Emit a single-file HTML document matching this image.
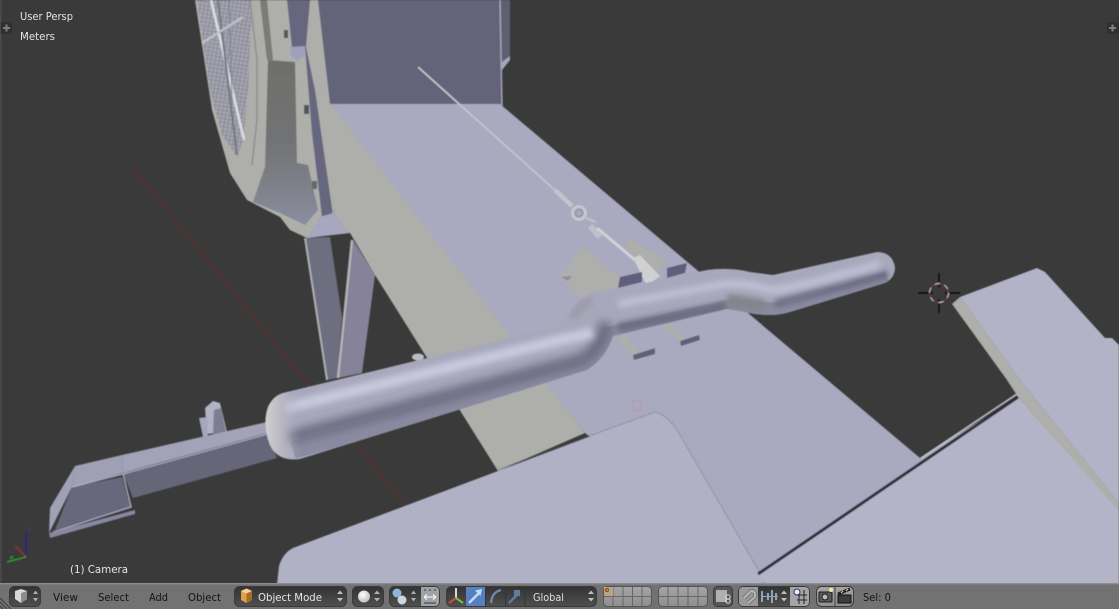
<!DOCTYPE html>
<html>
<head>
<meta charset="utf-8">
<title>Blender viewport</title>
<style>
html,body{margin:0;padding:0;background:#3a3a3a;width:1119px;height:609px;overflow:hidden}
svg{display:block}
text{font-family:"DejaVu Sans","Liberation Sans",sans-serif}
</style>
</head>
<body>
<svg width="1119" height="609" viewBox="0 0 1119 609" xmlns="http://www.w3.org/2000/svg">
<defs>
<filter id="s" x="-2%" y="-2%" width="104%" height="104%"><feGaussianBlur stdDeviation="0.5"/></filter>
<filter id="b2" filterUnits="userSpaceOnUse" x="200" y="200" width="760" height="300"><feGaussianBlur stdDeviation="3"/></filter>
<filter id="b4" filterUnits="userSpaceOnUse" x="200" y="200" width="760" height="300"><feGaussianBlur stdDeviation="4.500"/></filter>
<clipPath id="barClip"><path d="M283,393 L563,325 Q572,302 592,293 L650,282 L707,270 Q730,267 750,272 L773,275 L877,252 Q892,252 895,267 Q895,278 885,283 L790,312 Q770,318 745,312 L727,309 L613,336 Q606,358 587,370 L300,459 Q278,462 270,445 Q262,425 268,407 Q273,396 283,393Z"/></clipPath>
<linearGradient id="gCap" gradientUnits="userSpaceOnUse" x1="265" y1="0" x2="302" y2="0">
<stop offset="0" stop-color="#d2d2d2"/><stop offset=".3" stop-color="#c6c6ca" stop-opacity=".8"/><stop offset="1" stop-color="#aaaabc" stop-opacity="0"/>
</linearGradient>
<linearGradient id="gDark" x1="0" y1="0" x2="0" y2="1">
<stop offset="0" stop-color="#6e6e6a"/><stop offset=".5" stop-color="#727375"/><stop offset="1" stop-color="#8a8e9e"/>
</linearGradient>
<linearGradient id="btn" x1="0" y1="0" x2="0" y2="1">
<stop offset="0" stop-color="#333"/><stop offset="1" stop-color="#4f4f4f"/>
</linearGradient>
<linearGradient id="gry" x1="0" y1="0" x2="0" y2="1">
<stop offset="0" stop-color="#a5a5a5"/><stop offset="1" stop-color="#8f8f8f"/>
</linearGradient>
<radialGradient id="sph" cx=".4" cy=".35" r=".7"><stop offset="0" stop-color="#fff"/><stop offset="1" stop-color="#bbb"/></radialGradient>
<pattern id="grid" width="4" height="4" patternUnits="userSpaceOnUse" patternTransform="rotate(10)">
<rect width="4" height="4" fill="#9a9aa6"/><path d="M0 0V4" stroke="#c4c4ce" stroke-width="1"/><path d="M0 2H4" stroke="#80808e" stroke-width=".6"/>
</pattern>
</defs>

<rect width="1119" height="609" fill="#3a3a3a"/>
<rect x="0" y="0" width="1.500" height="584" fill="#4b4b4b"/>

<g filter="url(#s)">
<!-- red axis -->
<path d="M133,167 L405,505" stroke="#5b3030" stroke-width="1.600" fill="none"/>

<!-- legs -->
<path d="M305,238 L330,237 L342,317 L337,378 L327,380Z" fill="#6d6e80"/>
<path d="M305,238 L327,380" stroke="#b0b0b0" stroke-width="2" fill="none"/>
<path d="M353,240 L375,275 L362,373 L338,378Z" fill="#858299"/>
<path d="M352,240 L338,378" stroke="#b5b5b5" stroke-width="2.400" fill="none"/>

<!-- back wall -->
<path d="M318,0 L500,0 L500,106 L328,106Z" fill="#63637a"/>
<path d="M500,0 L510,0 L510,60 L502,70 L502,106 L500,106Z" fill="#5e5e72"/>
<path d="M500,0 L502,106" stroke="#a8a8bc" stroke-width="1.400"/>
<path d="M502,70 L510,60 L510,56 L502,62Z" fill="#a6a6bc"/>

<!-- fan body -->
<path d="M195,0 L212,110 L230,173 L247,200 L280,217 L290,230 L307,238 L350,233 L335,215 L330,104 L318,0Z" fill="#aeaeab"/>
<!-- grille -->
<path d="M197,0 L252,0 L248,93 L243,140 L237,157 L222,135 L210,90Z" fill="url(#grid)"/>
<path d="M211,0 L244,140" stroke="#dcdce2" stroke-width="2.600"/>
<path d="M218,0 L237,155" stroke="#777784" stroke-width="2"/>
<path d="M229,0 L232,100" stroke="#80808e" stroke-width="1"/>
<path d="M202,43 L243,17" stroke="#c0c0ca" stroke-width="2.400"/>
<path d="M250,0 L257,60 L257,120 L252,165" stroke="#8f8f94" stroke-width="1.500" fill="none"/>
<!-- dark strips -->
<path d="M260,0 L267,0 L273,60 L267,60Z" fill="#7b7b74"/>
<path d="M268,60 L295,62 L297,163 L308,165 L318,210 L305,225 L280,213 L253,202 L265,167Z" fill="url(#gDark)"/>
<path d="M287,0 L310,0 L306,47 L292,47Z" fill="#66667f"/>
<path d="M305,47 L306,47 L315,90 L333,215 L322,217 L312,133Z" fill="#66667f"/>
<path d="M290,47 L305,46 L305,55 L297,61 L291,55Z" fill="#a0a0bc"/>
<path d="M333,213 L350,232 L307,238 L320,217Z" fill="#a7a7c0"/>
<rect x="284" y="30" width="4" height="8" fill="#55555f"/>
<rect x="304" y="105" width="5" height="9" fill="#55555f"/>
<rect x="312" y="181" width="5" height="8" fill="#66666c"/>

<!-- board -->
<path d="M328,104 L500,104 L920,458 L1018,397 L760,575 L585,433Z" fill="#a9a9bf"/>
<!-- beige strip -->
<path d="M328,106 L331,105 L585,433 L498,471 L375,275 L350,233 L335,215Z" fill="#aeaeab"/>

<!-- cable -->
<path d="M418,67 L556,191" stroke="#c4c4c8" stroke-width="1.800" fill="none"/>
<path d="M555,190 L572,206" stroke="#c4c4cc" stroke-width="4.500" fill="none"/>
<circle cx="579" cy="213" r="6.500" fill="none" stroke="#c8c8d0" stroke-width="2.800"/>
<circle cx="579" cy="213" r="3.500" fill="none" stroke="#80808e" stroke-width=".8"/>
<path d="M586,218 L596,222" stroke="#c4c4cc" stroke-width="2"/>
<path d="M590,226 L600,237" stroke="#c0c0c8" stroke-width="6"/>
<!-- slot beige shapes -->
<path d="M582,245 L560,277 L578,297 L620,290 L620,278Z" fill="#aeaeac"/>
<path d="M630,238 L623,247 L657,273 L668,262Z" fill="#aeaeac"/>
<path d="M561,277 L572,276 L568,281Z" fill="#8e8e9c"/>
<path d="M597,228 L635,260" stroke="#d2d2d6" stroke-width="3"/>
<path d="M633,258 L640,255 L660,276 L647,286 L640,272Z" fill="#d0d0d2"/>
<path d="M620,277 L642,272 L642,282 L618,288Z" fill="#5f5f7c"/>
<path d="M667,268 L687,263 L685,273 L667,278Z" fill="#5f5f7c"/>
<path d="M615,337 L635,358 L641,355 L625,334Z" fill="#aeaeac"/>
<path d="M662,325 L680,343 L686,341 L670,323Z" fill="#aeaeac"/>
<path d="M633,355 L655,348 L655,354 L634,360Z" fill="#60607c"/>
<path d="M680,341 L699,335 L700,340 L681,346Z" fill="#60607c"/>
<ellipse cx="418" cy="357" rx="6" ry="3.500" fill="#bcbcc0"/>
<!-- origin square -->
<rect x="632.500" y="401" width="9" height="9" fill="none" stroke="#c58a96" stroke-width="1" stroke-dasharray="2.500 1.500"/>

<!-- handle -->
<path d="M205,408 L213,401 L220,403 L227,432 L207,434Z" fill="#b2b2c4"/>
<path d="M214,410 L221,408 L226,432 L213,434Z" fill="#7d7d90"/>
<path d="M199,418 L207,417 L208,437 L203,437Z" fill="#a6a6bc"/>
<path d="M122,455 L267,422 L268,433 L123,473Z" fill="#a2a2b8"/>
<path d="M123,473 L268,435 L277,458 L133,498Z" fill="#666679"/>
<path d="M75,466 L122,455 L123,473 L72,487Z" fill="#a0a0b4"/>
<path d="M75,466 L50,508 L49,533 L72,487Z" fill="#a0a0b6"/>
<path d="M72,487 L122,477 L130,507 L55,530Z" fill="#68687c"/>
<path d="M72,487 L123,474 L268,434" stroke="#b0b0c6" stroke-width="1.200" fill="none"/>
<path d="M123,474 L131,507 L53,532" stroke="#a6a6bc" stroke-width="1.500" fill="none"/>
<path d="M49,533 L135,510 L135,514 L50,538Z" fill="#8787a0"/>

<!-- seat centre -->
<path d="M277,584 L279,566 Q283,553 293,548 L498,471 L655,412 Q668,416 677,430 L760,573 L764,584Z" fill="#b1b1c6"/>
<path d="M499,469 L655,412 Q668,416 677,430 L760,573" fill="none" stroke="#565668" stroke-width=".7" stroke-dasharray="1.500 1.500"/>

<!-- lower right seat -->
<path d="M1018,397 L1119,510 L1119,584 L765,584 L758,575Z" fill="#b4b4c9"/>
<path d="M758,574 L1018,397" stroke="#2f2f38" stroke-width="3" fill="none"/>
<path d="M921,458 L1017,394" stroke="#c9c9d2" stroke-width="1.500" fill="none"/>

<!-- right panel -->
<path d="M952,304 L960,297 L1020,380 L1119,503 L1119,511 L1018,397 L1007,380Z" fill="#aeaeab"/>
<path d="M960,297 L1037,268 L1045,272 L1105,338 L1112,338 L1119,345 L1119,503 L1020,380Z" fill="#b3b3c8"/>

<!-- bar -->
<g clip-path="url(#barClip)">
<rect x="255" y="240" width="650" height="230" fill="#a8a8bc"/>
<!-- lower tone -->
<path d="M293,450 L590,368 L612,335 L727,309 L790,312 L888,280" stroke="#8a8aa0" stroke-width="18" fill="none"/>
<!-- shadows -->
<path d="M288,438 L580,360 Q602,350 606,322" stroke="#6c6c82" stroke-width="13" fill="none" filter="url(#b4)"/>
<path d="M618,328 L727,306" stroke="#6c6c82" stroke-width="10" fill="none" filter="url(#b2)"/>
<path d="M727,300 Q745,302 765,306" stroke="#84848c" stroke-width="12" fill="none" filter="url(#b2)"/>
<path d="M775,304 L888,274" stroke="#6c6c82" stroke-width="8" fill="none" filter="url(#b2)"/>
<!-- highlights -->
<path d="M285,408 L568,338 Q585,335 592,332" stroke="#c8c8de" stroke-width="11" fill="none" filter="url(#b2)"/>
<path d="M618,304 L725,284 Q750,283 770,290 Q780,292 880,264" stroke="#bebed4" stroke-width="8" fill="none" filter="url(#b2)"/>
<!-- bend top -->
<path d="M572,318 Q580,305 592,300" stroke="#9c9cac" stroke-width="10" fill="none" filter="url(#b2)"/>
<rect x="255" y="380" width="50" height="90" fill="url(#gCap)"/>
</g>

<!-- crosshair -->
<g fill="none">
<path d="M918,293H933M945,293H960M939,273V287M939,299V313" stroke="#000" stroke-width="1.200"/>
<circle cx="939" cy="293" r="9.500" stroke="#e8e8e8" stroke-width="1" stroke-dasharray="6 4"/>
<circle cx="939" cy="293" r="9.500" stroke="#8f2f35" stroke-width="1" stroke-dasharray="4 6" stroke-dashoffset="5"/>
</g>

<!-- axis gizmo -->
<path d="M26,533V557" stroke="#22228a" stroke-width="1.600"/>
<path d="M26,557L15,546" stroke="#8a3030" stroke-width="2"/>
<path d="M26,557L7,562" stroke="#2f9a2f" stroke-width="1.600"/>
<path d="M10,556l3,3m0-3l-3,3" stroke="#2f9a2f" stroke-width="1"/>
<text x="28" y="531" font-size="7" fill="#3a3ab0">z</text>
</g>

<!-- overlay text -->
<g font-size="10.500" fill="#e4e4e4">
<text x="20" y="20" textLength="53" lengthAdjust="spacingAndGlyphs">User Persp</text>
<text x="20" y="40" textLength="35" lengthAdjust="spacingAndGlyphs">Meters</text>
<text x="70" y="573" textLength="58" lengthAdjust="spacingAndGlyphs">(1) Camera</text>
</g>

<!-- corner plus widgets -->
<rect x="1" y="22" width="11" height="12" fill="#303030"/>
<path d="M3,28H10M6.500,24.500V31.500" stroke="#7f7f7f" stroke-width="2"/>
<rect x="1107" y="22" width="12" height="12" fill="#303030"/>
<path d="M1109,28H1116M1112.500,24.500V31.500" stroke="#7f7f7f" stroke-width="2"/>

<!-- header -->
<rect x="0" y="583" width="1119" height="26" fill="#727272"/>
<rect x="0" y="583" width="1119" height="1.400" fill="#8d8d8d"/>
<path d="M0,598L11,609M0,602L7,609M0,606L3,609" stroke="#3e3e3e" stroke-width="1"/>

<!-- editor type -->
<rect x="9.500" y="586.500" width="31" height="20" rx="5" fill="url(#btn)" stroke="#3a3a3a"/>
<path d="M15,591 L21,589 L27,591 L27,599 L21,603 L15,599Z" fill="#d8d8d8"/>
<path d="M21,593 L27,591 L27,599 L21,603Z" fill="#8c8c8c"/>
<path d="M33,594l2.500-3.500 2.500,3.500zM33,598l2.500,3.500 2.500-3.500z" fill="#b0b0b0"/>

<g font-size="10.500" fill="#141414">
<text x="53" y="601" textLength="25" lengthAdjust="spacingAndGlyphs">View</text>
<text x="98" y="601" textLength="31" lengthAdjust="spacingAndGlyphs">Select</text>
<text x="149" y="601" textLength="19" lengthAdjust="spacingAndGlyphs">Add</text>
<text x="188" y="601" textLength="33" lengthAdjust="spacingAndGlyphs">Object</text>
</g>

<!-- mode -->
<rect x="234.500" y="586.500" width="112" height="20" rx="5" fill="url(#btn)" stroke="#3a3a3a"/>
<path d="M241,591 L246.500,588.500 L252,591 L252,600 L246.500,603 L241,600Z" fill="#e0a050"/>
<path d="M241,591 L246.500,593.500 L252,591 L246.500,588.500Z" fill="#f4d09a"/>
<path d="M246.500,593.500 L252,591 L252,600 L246.500,603Z" fill="#a86c28"/>
<text x="258" y="601" font-size="10.500" fill="#e6e6e6" textLength="64" lengthAdjust="spacingAndGlyphs">Object Mode</text>
<path d="M337,594l3-3.500 3,3.500zM337,598l3,3.500 3-3.500z" fill="#c0c0c0"/>

<!-- shading -->
<rect x="352.500" y="586.500" width="31" height="20" rx="5" fill="url(#btn)" stroke="#3a3a3a"/>
<circle cx="364" cy="596.500" r="6" fill="url(#sph)"/>
<path d="M374,594l3-3.500 3,3.500zM374,598l3,3.500 3-3.500z" fill="#b0b0b0"/>

<!-- pivot -->
<rect x="389.500" y="586.500" width="50" height="20" rx="5" fill="url(#btn)" stroke="#3a3a3a"/>
<path d="M421,587H435a4,4 0 0 1 4,4V602a4,4 0 0 1-4,4H421Z" fill="#a2a2a2"/>
<circle cx="397" cy="593" r="4.500" fill="#8fb4d8"/><circle cx="402" cy="600" r="4.500" fill="#c9d6e4"/>
<path d="M411,594l2.500-3.500 2.500,3.500zM411,598l2.500,3.500 2.500-3.500z" fill="#b0b0b0"/>
<path d="M424,597H436M424,597l3-2.500M424,597l3,2.500M436,597l-3-2.500M436,597l-3,2.500" stroke="#f2f2f2" stroke-width="1.200" fill="none"/>
<path d="M424,590h2M429,590h2M434,590h2M424,603h12" stroke="#3c5f80" stroke-width="1.500"/>

<!-- manipulators -->
<rect x="446.500" y="586.500" width="150" height="20" rx="5" fill="url(#btn)" stroke="#3a3a3a"/>
<rect x="466" y="587" width="19.500" height="19" fill="#5680c2"/>
<path d="M456,588V598" stroke="#d8d8d8" stroke-width="2"/>
<path d="M456,598L449,603" stroke="#d04a3a" stroke-width="2"/>
<path d="M456,598L463,603" stroke="#7cbf3a" stroke-width="2"/>
<path d="M469,603L480,592" stroke="#c4ddf6" stroke-width="2.400"/>
<path d="M482,589l-7,1.500 5.500,5.500z" fill="#c4ddf6"/>
<path d="M491,603Q492,592 501,590" stroke="#6d8aa8" stroke-width="2.400" fill="none"/>
<path d="M509,603L518,594" stroke="#5d7ea0" stroke-width="2.400"/>
<path d="M514,590h6v6h-6z" fill="#5d7ea0"/>
<path d="M485.500,587V606M505.500,587V606M525,587V606" stroke="#333" stroke-width="1"/>
<text x="533" y="601" font-size="10.500" fill="#dedede" textLength="31" lengthAdjust="spacingAndGlyphs">Global</text>
<path d="M588,594l3-3.500 3,3.500zM588,598l3,3.500 3-3.500z" fill="#c0c0c0"/>

<!-- layers -->
<g fill="url(#gry)" stroke="#555" stroke-width="1">
<rect x="603.500" y="586.500" width="48" height="20" rx="4"/>
<rect x="658.500" y="586.500" width="49" height="20" rx="4"/>
</g>
<path d="M613,587V606M623,587V606M632.500,587V606M642,587V606M604,596.500H651M668,587V606M678,587V606M688,587V606M698,587V606M659,596.500H707" stroke="#666" stroke-width="1"/>
<rect x="604" y="587" width="9" height="9" fill="#b8a488"/>
<circle cx="607" cy="590" r="1.800" fill="#d07a2a" stroke="#3a2a10" stroke-width=".5"/>

<!-- lock -->
<rect x="713.500" y="586.500" width="19" height="20" rx="4" fill="#565656" stroke="#3a3a3a"/>
<rect x="716" y="590" width="11" height="12" fill="#b0b0b0"/>
<circle cx="728" cy="597" r="2.200" fill="none" stroke="#ddd" stroke-width="1"/><circle cx="728" cy="601" r="2.200" fill="none" stroke="#ddd" stroke-width="1"/>

<!-- snap -->
<rect x="738.500" y="586.500" width="71" height="20" rx="5" fill="url(#btn)" stroke="#3a3a3a"/>
<path d="M739,591a4,4 0 0 1 4-4H758V606H743a4,4 0 0 1-4-4Z" fill="#9a9a9a"/>
<path d="M790,587H805a4,4 0 0 1 4,4V602a4,4 0 0 1-4,4H790Z" fill="#a5a5a5"/>
<path d="M744,598 L751,591 Q756,591 755,597 L748,603" fill="none" stroke="#6a6a6a" stroke-width="4"/>
<path d="M744,598 L751,591 Q756,591 755,597 L748,603" fill="none" stroke="#b4b4b4" stroke-width="2.400"/>
<path d="M762,591V602M768,593V600M772,590V603M776,593V600" stroke="#c4d8ec" stroke-width="1.300"/>
<path d="M762,596.500H778" stroke="#7fa8d0" stroke-width="1"/>
<path d="M781,594l3-3.500 3,3.500zM781,598l3,3.500 3-3.500z" fill="#c0c0c0"/>
<path d="M797,595H807M797,600H807M799,590V604M804,590V604" stroke="#222" stroke-width="1"/>
<circle cx="797" cy="592" r="3" fill="#e4eef8" stroke="#335" stroke-width="1"/>

<!-- render -->
<rect x="816.500" y="586.500" width="37" height="20" rx="5" fill="url(#gry)" stroke="#3a3a3a"/>
<path d="M835,587V606" stroke="#444"/>
<rect x="819" y="592" width="13" height="10" rx="1" fill="#5a5a5a" stroke="#1c1c1c"/>
<circle cx="825" cy="597" r="3" fill="#bbb" stroke="#1c1c1c"/>
<circle cx="831" cy="590" r="2" fill="#f5e9a0"/>
<rect x="838" y="595" width="13" height="8" fill="#3c3c3c" stroke="#111"/>
<path d="M838,594L850,589" stroke="#222" stroke-width="3"/>
<path d="M841,593L843,591M846,591L848,589" stroke="#ddd" stroke-width="1"/>

<text x="863" y="601" font-size="10.500" fill="#141414" textLength="28" lengthAdjust="spacingAndGlyphs">Sel: 0</text>
</svg>
</body>
</html>
